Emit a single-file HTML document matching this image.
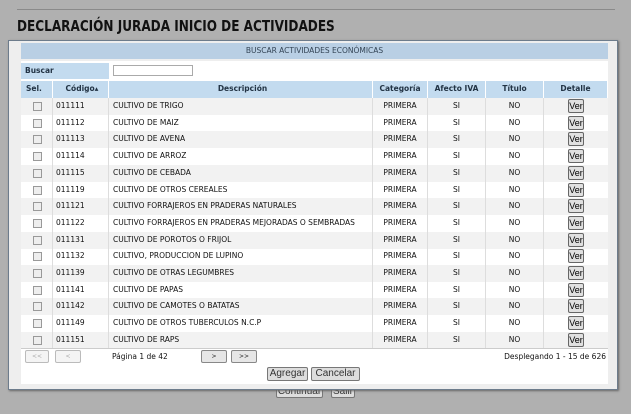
<!DOCTYPE html>
<html><head><meta charset="utf-8"><style>
*{margin:0;padding:0;box-sizing:border-box}
body{width:631px;height:414px;background:#b0b0b0;font-family:"DejaVu Sans","Liberation Sans",sans-serif;position:relative;overflow:hidden}
.line{position:absolute;left:17px;top:9px;width:598px;height:1px;background:#8a8a8a}
h1{position:absolute;left:17px;top:17px;font:bold 15px "DejaVu Sans",sans-serif;color:#111;white-space:nowrap;transform:scaleX(0.805);transform-origin:left top}
.bb{position:absolute;height:12px;border:1px solid #777;background:#ddd;font:10px "Liberation Sans",sans-serif;color:#333;text-align:center;line-height:10px;border-radius:2px}
.dlg{position:absolute;left:8px;top:40px;width:610px;height:350px;background:#eeeeee;border:1px solid #6d7c8c;box-shadow:1px 1px 2px #666}
.hdr{position:absolute;left:12px;top:2px;width:587px;height:16px;background:#b9cfe4;font-size:7.5px;color:#345;text-align:center;line-height:16px}
.pn{position:absolute;left:12px;top:20px;width:587px;height:323px;background:#fff}
.row{position:absolute;left:0;width:587px;height:17px;font-size:7.5px;color:#111;line-height:16px}
.row div{position:absolute;top:0;height:100%;border-right:1px solid #ddd;white-space:nowrap}
.c1{left:0;width:32px}.c2{left:32px;width:56px;padding-left:3px}.c3{left:88px;width:264px;padding-left:4px}
.c4{left:352px;width:55px;text-align:center}.c5{left:407px;width:58px;text-align:center}.c6{left:465px;width:58px;text-align:center}.c7{left:523px;width:64px;text-align:center;border-right:none!important}
.hrow{background:#c3dbef;font-weight:bold;color:#234;text-align:center}
.hrow div{border-right:1px solid #fff!important}
.cb{position:absolute;left:12px;top:4px;width:9px;height:9px;border:1px solid #999;background:#eee}
.ver{display:inline-block;margin-top:1px;width:16px;height:14px;border:1px solid #666;border-radius:2px;background:#e0e0e0;font:9px "Liberation Sans",sans-serif;line-height:12px;color:#000}
.odd{background:#f2f2f2}
.pb{position:absolute;top:5px;height:13px;border:1px solid #bbb;border-radius:2px;background:#f4f4f4;font-size:6px;color:#aaa;text-align:center;line-height:11px}
.pb.a{border-color:#888;background:#e6e6e6;color:#222}
</style></head><body>
<div class="line"></div>
<h1>DECLARACIÓN JURADA INICIO DE ACTIVIDADES</h1>
<div class="bb" style="left:276px;top:386px;width:47px;">Continuar</div>
<div class="bb" style="left:331px;top:386px;width:24px;">Salir</div>
<div class="dlg">
<div class="hdr">BUSCAR ACTIVIDADES ECONÓMICAS</div>
<div class="pn">
<div class="row" style="top:2px;height:16px;font-weight:bold;color:#234"><div style="left:0;width:88px;background:#c3dbef;padding-left:4px;border:none">Buscar</div><div style="left:92px;top:2px;width:80px;height:11px;border:1px solid #aaa"></div></div>
<div class="row hrow" style="top:20px"><div class="c1" style="text-align:left;padding-left:5px">Sel.</div><div class="c2">Código▴</div><div class="c3">Descripción</div><div class="c4">Categoría</div><div class="c5">Afecto IVA</div><div class="c6">Título</div><div class="c7">Detalle</div></div>
<div class="row odd" style="top:37px"><div class="c1"><span class="cb"></span></div><div class="c2">011111</div><div class="c3">CULTIVO DE TRIGO</div><div class="c4">PRIMERA</div><div class="c5">SI</div><div class="c6">NO</div><div class="c7"><span class="ver">Ver</span></div></div>
<div class="row" style="top:53.7px"><div class="c1"><span class="cb"></span></div><div class="c2">011112</div><div class="c3">CULTIVO DE MAIZ</div><div class="c4">PRIMERA</div><div class="c5">SI</div><div class="c6">NO</div><div class="c7"><span class="ver">Ver</span></div></div>
<div class="row odd" style="top:70.4px"><div class="c1"><span class="cb"></span></div><div class="c2">011113</div><div class="c3">CULTIVO DE AVENA</div><div class="c4">PRIMERA</div><div class="c5">SI</div><div class="c6">NO</div><div class="c7"><span class="ver">Ver</span></div></div>
<div class="row" style="top:87.1px"><div class="c1"><span class="cb"></span></div><div class="c2">011114</div><div class="c3">CULTIVO DE ARROZ</div><div class="c4">PRIMERA</div><div class="c5">SI</div><div class="c6">NO</div><div class="c7"><span class="ver">Ver</span></div></div>
<div class="row odd" style="top:103.8px"><div class="c1"><span class="cb"></span></div><div class="c2">011115</div><div class="c3">CULTIVO DE CEBADA</div><div class="c4">PRIMERA</div><div class="c5">SI</div><div class="c6">NO</div><div class="c7"><span class="ver">Ver</span></div></div>
<div class="row" style="top:120.5px"><div class="c1"><span class="cb"></span></div><div class="c2">011119</div><div class="c3">CULTIVO DE OTROS CEREALES</div><div class="c4">PRIMERA</div><div class="c5">SI</div><div class="c6">NO</div><div class="c7"><span class="ver">Ver</span></div></div>
<div class="row odd" style="top:137.2px"><div class="c1"><span class="cb"></span></div><div class="c2">011121</div><div class="c3">CULTIVO FORRAJEROS EN PRADERAS NATURALES</div><div class="c4">PRIMERA</div><div class="c5">SI</div><div class="c6">NO</div><div class="c7"><span class="ver">Ver</span></div></div>
<div class="row" style="top:153.9px"><div class="c1"><span class="cb"></span></div><div class="c2">011122</div><div class="c3">CULTIVO FORRAJEROS EN PRADERAS MEJORADAS O SEMBRADAS</div><div class="c4">PRIMERA</div><div class="c5">SI</div><div class="c6">NO</div><div class="c7"><span class="ver">Ver</span></div></div>
<div class="row odd" style="top:170.6px"><div class="c1"><span class="cb"></span></div><div class="c2">011131</div><div class="c3">CULTIVO DE POROTOS O FRIJOL</div><div class="c4">PRIMERA</div><div class="c5">SI</div><div class="c6">NO</div><div class="c7"><span class="ver">Ver</span></div></div>
<div class="row" style="top:187.3px"><div class="c1"><span class="cb"></span></div><div class="c2">011132</div><div class="c3">CULTIVO, PRODUCCION DE LUPINO</div><div class="c4">PRIMERA</div><div class="c5">SI</div><div class="c6">NO</div><div class="c7"><span class="ver">Ver</span></div></div>
<div class="row odd" style="top:204px"><div class="c1"><span class="cb"></span></div><div class="c2">011139</div><div class="c3">CULTIVO DE OTRAS LEGUMBRES</div><div class="c4">PRIMERA</div><div class="c5">SI</div><div class="c6">NO</div><div class="c7"><span class="ver">Ver</span></div></div>
<div class="row" style="top:220.7px"><div class="c1"><span class="cb"></span></div><div class="c2">011141</div><div class="c3">CULTIVO DE PAPAS</div><div class="c4">PRIMERA</div><div class="c5">SI</div><div class="c6">NO</div><div class="c7"><span class="ver">Ver</span></div></div>
<div class="row odd" style="top:237.4px"><div class="c1"><span class="cb"></span></div><div class="c2">011142</div><div class="c3">CULTIVO DE CAMOTES O BATATAS</div><div class="c4">PRIMERA</div><div class="c5">SI</div><div class="c6">NO</div><div class="c7"><span class="ver">Ver</span></div></div>
<div class="row" style="top:254.1px"><div class="c1"><span class="cb"></span></div><div class="c2">011149</div><div class="c3">CULTIVO DE OTROS TUBERCULOS N.C.P</div><div class="c4">PRIMERA</div><div class="c5">SI</div><div class="c6">NO</div><div class="c7"><span class="ver">Ver</span></div></div>
<div class="row odd" style="top:270.8px;border-bottom:1px solid #ccc"><div class="c1"><span class="cb"></span></div><div class="c2">011151</div><div class="c3">CULTIVO DE RAPS</div><div class="c4">PRIMERA</div><div class="c5">SI</div><div class="c6">NO</div><div class="c7"><span class="ver">Ver</span></div></div>
<div style="position:absolute;left:0;top:284px;width:587px;height:22px;font-size:7.5px;color:#111">
<div class="pb" style="left:4px;width:24px">&lt;&lt;</div>
<div class="pb" style="left:34px;width:26px">&lt;</div>
<div style="position:absolute;left:91px;top:7px">Página 1 de 42</div>
<div class="pb a" style="left:180px;width:26px">&gt;</div>
<div class="pb a" style="left:210px;width:26px">&gt;&gt;</div>
<div style="position:absolute;right:2px;top:7px">Desplegando 1 - 15 de 626</div>
</div>
<div class="bb" style="left:246px;top:306px;width:41px;height:14px;line-height:12px">Agregar</div>
<div class="bb" style="left:290px;top:306px;width:49px;height:14px;line-height:12px">Cancelar</div>
</div>
</div>
</body></html>
